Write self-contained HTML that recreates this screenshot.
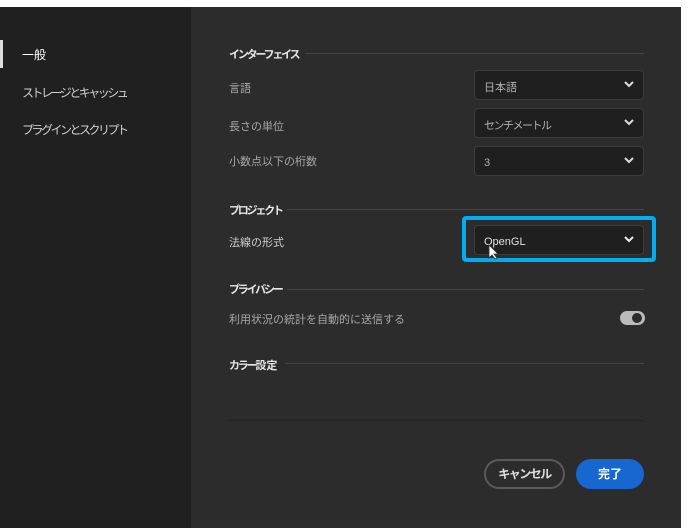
<!DOCTYPE html>
<html><head><meta charset="utf-8"><style>
*{margin:0;padding:0;box-sizing:border-box}
body{width:688px;height:528px;background:#fff;position:relative;overflow:hidden;font-family:"Liberation Sans","Noto Sans CJK JP",sans-serif}
.side{position:absolute;left:0;top:7px;width:191px;height:521px;background:#202020}
.main{position:absolute;left:191px;top:7px;width:490px;height:521px;background:#2c2c2c}
.a{position:absolute;white-space:nowrap}
.nav{font-size:12px;color:#d0d0d0;left:22px;letter-spacing:-2.5px}
.h{font-size:11px;font-weight:bold;color:#e6e6e6;left:229px;letter-spacing:-2.2px}
.l{font-size:11px;color:#a8a8a8;left:229px}
.line{position:absolute;height:1px;background:#444}
.dd{position:absolute;left:474px;width:170px;height:30px;background:#1f1f1f;border:1px solid #3c3c3c;border-radius:4px;color:#b0b0b0;font-size:11px;padding:8px 0 0 9px}
.dd svg{position:absolute;right:9px;top:10px}
</style></head><body>
<div class="side"></div><div class="main"></div>
<div style="position:absolute;left:0;top:40px;width:3px;height:28px;background:#ddd"></div>
<div class="a nav" style="top:46px;color:#fff;letter-spacing:0">一般</div>
<div class="a nav" style="top:84px">ストレージとキャッシュ</div>
<div class="a nav" style="top:121px">プラグインとスクリプト</div>

<div class="a h" style="top:46px">インターフェイス</div><div class="line" style="left:305px;top:53px;width:339px"></div>
<div class="a l" style="top:80px">言語</div>
<div class="a l" style="top:118px">長さの単位</div>
<div class="a l" style="top:153px">小数点以下の桁数</div>
<div class="dd" style="top:70px">日本語<svg width="10" height="7" viewBox="0 0 10 7"><path d="M1 1l4 4 4-4" stroke="#ddd" stroke-width="2" fill="none"/></svg></div>
<div class="dd" style="top:108px;letter-spacing:-1.5px">センチメートル<svg width="10" height="7" viewBox="0 0 10 7"><path d="M1 1l4 4 4-4" stroke="#ddd" stroke-width="2" fill="none"/></svg></div>
<div class="dd" style="top:146px;padding-top:10px">3<svg width="10" height="7" viewBox="0 0 10 7"><path d="M1 1l4 4 4-4" stroke="#ddd" stroke-width="2" fill="none"/></svg></div>

<div class="a h" style="top:202px">プロジェクト</div><div class="line" style="left:287px;top:209px;width:357px"></div>
<div class="a l" style="top:234px;color:#d0d0d0">法線の形式</div>
<div style="position:absolute;left:462px;top:216px;width:194px;height:46px;border:4px solid #00aeef;border-radius:4px"></div>
<div class="dd" style="top:225px;color:#e0e0e0;padding-top:10px">OpenGL<svg width="10" height="7" viewBox="0 0 10 7"><path d="M1 1l4 4 4-4" stroke="#eee" stroke-width="2" fill="none"/></svg></div>
<svg style="position:absolute;left:488px;top:244px" width="12" height="16" viewBox="0 0 12 16"><path d="M1 1v13l3-3 3 4 2-1-3-4h4z" fill="#fff" stroke="#333" stroke-width=".8"/></svg>

<div class="a h" style="top:281px">プライバシー</div><div class="line" style="left:287px;top:289px;width:357px"></div>
<div class="a l" style="top:311px">利用状況の統計を自動的に送信する</div>
<div style="position:absolute;left:620px;top:311px;width:25px;height:14px;border-radius:7px;background:#bbb"></div>
<div style="position:absolute;left:632px;top:313px;width:10px;height:10px;border-radius:5px;background:#2c2c2c"></div>

<div class="a h" style="top:357px">カラー<span style="letter-spacing:0">設定</span></div><div class="line" style="left:285px;top:363px;width:359px"></div>
<div class="line" style="left:229px;top:420px;width:415px;background:#222"></div>

<div style="position:absolute;left:484px;top:459px;width:81px;height:30px;border:2px solid #5a5a5a;border-radius:15px;color:#ddd;font-size:12px;font-weight:bold;text-align:center;line-height:26px;letter-spacing:-1.5px">キャンセル</div>
<div style="position:absolute;left:576px;top:459px;width:68px;height:30px;background:#1668d0;border-radius:15px;color:#fff;font-size:12px;font-weight:bold;text-align:center;line-height:30px">完了</div>
</body></html>
